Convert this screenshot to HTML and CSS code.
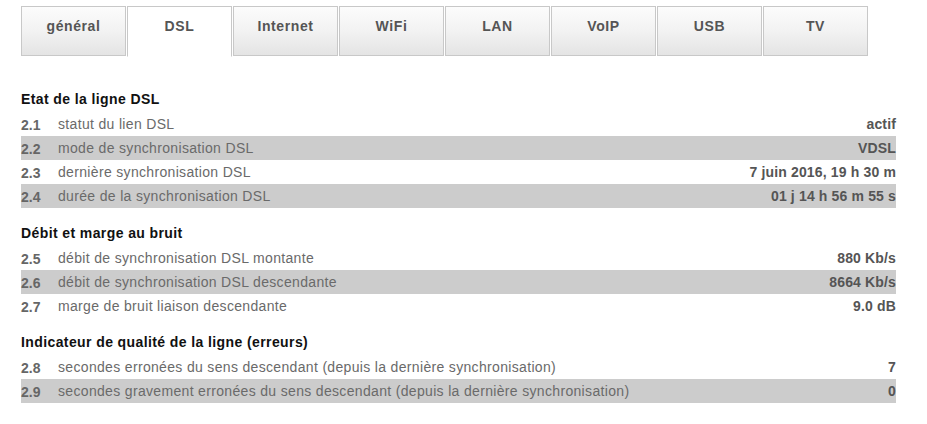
FILE: index.html
```html
<!DOCTYPE html>
<html lang="fr">
<head>
<meta charset="utf-8">
<title>DSL</title>
<link rel="stylesheet" href="styles.css">
</head>
<body>
<div class="page">
  <nav class="tabs">
    <div class="tab">général</div>
    <div class="tab active">DSL</div>
    <div class="tab">Internet</div>
    <div class="tab">WiFi</div>
    <div class="tab">LAN</div>
    <div class="tab">VoIP</div>
    <div class="tab">USB</div>
    <div class="tab">TV</div>
  </nav>

  <section class="section first">
    <h2 class="heading">Etat de la ligne DSL</h2>
    <div class="row"><span class="num">2.1</span><span class="label">statut du lien DSL</span><span class="value">actif</span></div>
    <div class="row alt"><span class="num">2.2</span><span class="label">mode de synchronisation DSL</span><span class="value">VDSL</span></div>
    <div class="row"><span class="num">2.3</span><span class="label">dernière synchronisation DSL</span><span class="value">7 juin 2016, 19 h 30 m</span></div>
    <div class="row alt"><span class="num">2.4</span><span class="label">durée de la synchronisation DSL</span><span class="value">01 j 14 h 56 m 55 s</span></div>
  </section>

  <section class="section">
    <h2 class="heading">Débit et marge au bruit</h2>
    <div class="row"><span class="num">2.5</span><span class="label">débit de synchronisation DSL montante</span><span class="value">880 Kb/s</span></div>
    <div class="row alt"><span class="num">2.6</span><span class="label">débit de synchronisation DSL descendante</span><span class="value">8664 Kb/s</span></div>
    <div class="row"><span class="num">2.7</span><span class="label">marge de bruit liaison descendante</span><span class="value">9.0 dB</span></div>
  </section>

  <section class="section last">
    <h2 class="heading">Indicateur de qualité de la ligne (erreurs)</h2>
    <div class="row"><span class="num">2.8</span><span class="label">secondes erronées du sens descendant (depuis la dernière synchronisation)</span><span class="value">7</span></div>
    <div class="row alt"><span class="num">2.9</span><span class="label">secondes gravement erronées du sens descendant (depuis la dernière synchronisation)</span><span class="value">0</span></div>
  </section>
</div>
</body>
</html>
```

FILE: styles.css
```css
html, body {
  margin: 0;
  padding: 0;
  background: #ffffff;
}

body {
  font-family: "Liberation Sans", Arial, sans-serif;
  font-size: 14px;
}

.page {
  padding: 6px 0 0 21px;
  width: 875px;
}

.tabs {
  display: flex;
  gap: 1px;
}

.tab {
  box-sizing: border-box;
  width: 105px;
  height: 50px;
  border: 1px solid #c8c8c8;
  background: linear-gradient(to bottom, #fcfcfc 0%, #f2f2f2 50%, #e4e4e4 100%);
  color: #555555;
  font-weight: bold;
  font-size: 14px;
  letter-spacing: 0.6px;
  line-height: 18px;
  text-align: center;
  padding-top: 10px;
}

.tab.active {
  background: #ffffff;
  border-bottom-color: #ffffff;
  height: 51px;
}

.section {
  margin-top: 15px;
}

.section.first {
  margin-top: 32px;
}

.section.last {
  margin-top: 14px;
}

.heading {
  margin: 0;
  height: 23px;
  box-sizing: border-box;
  padding-top: 1px;
  font-size: 14px;
  letter-spacing: 0.4px;
  line-height: 18px;
  font-weight: bold;
  color: #111111;
}

.row {
  display: flex;
  height: 24px;
  line-height: 24px;
  color: #666666;
}

.row.alt {
  background: #cccccc;
}

.num {
  width: 37px;
  flex: none;
  font-weight: bold;
  color: #666666;
  padding-top: 1px;
}

.label {
  flex: 1;
  color: #6a6a6a;
  letter-spacing: 0.33px;
}

.value {
  font-weight: bold;
  color: #555555;
  text-align: right;
  letter-spacing: 0.15px;
}
```
